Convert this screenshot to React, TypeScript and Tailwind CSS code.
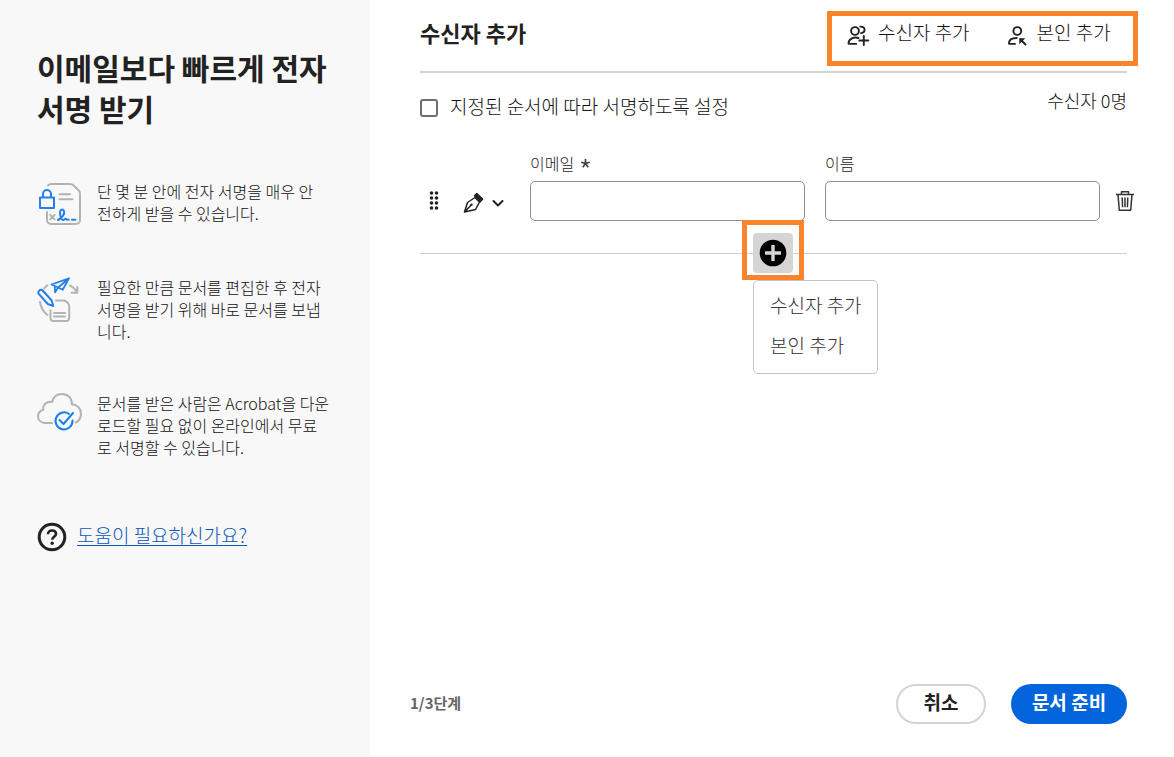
import type { ReactNode } from "react";

const AddPersonIcon = () => (
  <svg width="24" height="24" viewBox="0 0 24 24" fill="none" stroke="#222" strokeWidth="1.9" strokeLinecap="round" aria-hidden="true">
    <circle cx="8" cy="6" r="3.9" />
    <path d="M11.5 13C7 11.6 1.8 13.5 1.5 18.2c0 .5.2.7.7.7h7" />
    <path d="M13.3 1.6c2.6 0 4.3 1.3 4.3 3.3 0 1.9-1.4 2.8-3.6 3.2" />
    <path d="M16.8 11v9M12.3 15.5h9" />
  </svg>
);

const AddSelfIcon = () => (
  <svg width="24" height="24" viewBox="0 0 24 24" fill="none" stroke="#222" strokeWidth="1.9" strokeLinecap="round" aria-hidden="true">
    <circle cx="10.3" cy="6" r="3.9" />
    <path d="M9.7 13c-4.2 0-7.6 1.8-7.8 5.2 0 .5.2.7.7.7H8" />
    <path d="M13.5 14.5l5 5" />
    <path d="M12.3 13.3h6l-6 6z" fill="#222" stroke="none" />
  </svg>
);

const SecureIcon = () => (
  <svg width="46" height="46" viewBox="-1 -2 46 46" fill="none" stroke="#b3b3b3" strokeWidth="2" strokeLinecap="round" strokeLinejoin="round" aria-hidden="true">
    <path d="M10 3.5c1-1.2 2-1.5 3.5-1.5H32c1.4 0 2.4.4 3.3 1.3l5.4 5.2c.9.9 1.3 1.8 1.3 3.2V38a4 4 0 0 1-4 4H13a4 4 0 0 1-4-4v-8" />
    <path d="M21.5 12.3H32M21.5 17.3h13M12.2 33l4.4 4.4M16.6 33l-4.4 4.4" />
    <g stroke="#2680eb">
      <rect x="2" y="15.5" width="14" height="10.5" />
      <path d="M5 15v-3a4 4 0 0 1 8 0v3" />
      <path d="M20 38c4-2 7-6 6-9-1-2.5-4.2-1.5-4 2 .2 4 1.5 7.5 3.5 7 1.5-.5 1.5-2 2.5-1 .8.7 1.5.7 2.7.7M34 37.7h3.5" />
    </g>
  </svg>
);

const PrepareIcon = () => (
  <svg width="46" height="50" viewBox="0 0 46 50" fill="none" stroke="#b3b3b3" strokeWidth="2" strokeLinecap="round" strokeLinejoin="round" aria-hidden="true">
    <path d="M7 12.5c1-1.3 2.1-2.3 3.5-3.2M33 9.3c3 1.5 5.5 4 7.2 7.2M40.3 11v5.7h-5.7M3 26c.8 5.2 3.3 9.7 7.5 13" />
    <path d="M19 24.5h7.5c1.4 0 2 .3 2.9 1.2l1.7 1.7c.8.8 1.1 1.6 1.1 2.8V42a3 3 0 0 1-3 3H16.500a3 3 0 0 1-3-3v-7.5M17 37h11M17 40.5h11" />
    <g stroke="#2680eb">
      <path d="M14.5 8.5L32 2.3l-6.3 11.5-4.5-2.3zM32 2.3L21.2 11.5M17.800 10.3l.2 6 3.2-4.8" strokeWidth="1.8" />
      <path d="M2 14.8c1.3-1.5 2.7-1.3 3.7-.3l9 10L16.2 30l-5.4-2L1.7 17.8c-.6-.9-.5-2 .3-3z" fill="#f8f8f8" />
    </g>
  </svg>
);

const CloudIcon = () => (
  <svg width="46" height="40" viewBox="0 0 46 40" fill="none" stroke="#b3b3b3" strokeWidth="2" strokeLinecap="round" strokeLinejoin="round" aria-hidden="true">
    <path d="M15 31H8c-4 0-7-2.8-7-6.7 0-3.3 2-5.7 5.3-6.6-.8-5 3.7-9 8.7-7.7C16.5 4.8 20.5 2 25 2c6 0 10.2 4.4 9.9 10.2C40.5 12.5 44 16.5 44 21.5c0 4-1.8 7.3-5.3 9" />
    <g stroke="#1480eb">
      <path d="M32 22A8.5 8.5 0 1 0 35.5 28.5" />
      <path d="M22.5 28l4 4 9.5-11" />
    </g>
  </svg>
);

const HelpIcon = () => (
  <svg width="30" height="30" viewBox="0 0 30 30" fill="none" stroke="#222" strokeWidth="3" aria-hidden="true">
    <circle cx="15" cy="15" r="12.8" />
    <path d="M11 12.2c0-2.5 1.8-3.7 4-3.7s4 1.2 4 3.4c0 2.9-3.8 2.9-3.8 5.9" strokeWidth="2.6" />
    <circle cx="15.2" cy="21.3" r="1.7" fill="#222" stroke="none" />
  </svg>
);

const GripIcon = () => (
  <svg width="10" height="20" viewBox="0 0 10 20" fill="#222" aria-hidden="true">
    {[2, 7, 12, 17].map((y) => (
      <g key={y}>
        <circle cx="2.5" cy={y} r="1.8" />
        <circle cx="7.5" cy={y} r="1.8" />
      </g>
    ))}
  </svg>
);

const NibIcon = () => (
  <svg width="22" height="22" viewBox="0 0 22 22" fill="none" stroke="#222" strokeWidth="1.5" strokeLinejoin="round" aria-hidden="true">
    <path d="M1.5 20L4.5 10.500 12 5.500l4.500 4.500-4 7.500zM1.500 20l6.800-7" />
    <circle cx="8.5" cy="12.7" r="1.2" fill="#222" stroke="none" />
    <path d="M11.5 3.8L13.8 1.5l5.8 5.6-2.3 2.6z" fill="#222" />
  </svg>
);

const ChevronIcon = () => (
  <svg width="12" height="8" viewBox="0 0 12 8" fill="none" stroke="#222" strokeWidth="2" strokeLinecap="round" strokeLinejoin="round" aria-hidden="true">
    <path d="M1.5 2L6 6.5 10.5 2" />
  </svg>
);

const TrashIcon = () => (
  <svg width="20" height="22" viewBox="0 0 20 22" fill="none" stroke="#333" strokeWidth="1.5" strokeLinejoin="round" aria-hidden="true">
    <path d="M1 4.5h18M6.5 4V1.7h7V4M3 4.5l1.3 15.7h11.4L17 4.5M7.2 7.5l.4 9.7M10 7.5v9.7M12.8 7.5l-.4 9.7" />
  </svg>
);

const PlusCircleIcon = () => (
  <svg width="28" height="28" viewBox="0 0 28 28" aria-hidden="true">
    <circle cx="14" cy="14" r="13.3" fill="#000" />
    <path d="M14 6v16M6 14h16" stroke="#d5d5d5" strokeWidth="3.4" />
  </svg>
);

const Feature = ({ icon, children }: { icon: ReactNode; children: ReactNode }) => (
  <li className="flex items-start gap-[14px]">
    <span className="shrink-0">{icon}</span>
    <p className="text-[16px] leading-[22px] whitespace-nowrap">{children}</p>
  </li>
);

const Sidebar = () => (
  <aside className="w-[370px] shrink-0 bg-[#f8f8f8] pt-[47px] pr-10 pl-[37px]">
    <h1 className="text-[30px] leading-[41px] font-bold">
      이메일보다 빠르게 전자
      <br />
      서명 받기
    </h1>
    <ul className="mt-[51px] flex flex-col gap-[50px] font-light text-[#111]">
      <Feature icon={<SecureIcon />}>
        단 몇 분 안에 전자 서명을 매우 안
        <br />
        전하게 받을 수 있습니다.
      </Feature>
      <Feature icon={<PrepareIcon />}>
        필요한 만큼 문서를 편집한 후 전자
        <br />
        서명을 받기 위해 바로 문서를 보냅
        <br />
        니다.
      </Feature>
      <Feature icon={<CloudIcon />}>
        문서를 받은 사람은 Acrobat을 다운
        <br />
        로드할 필요 없이 온라인에서 무료
        <br />
        로 서명할 수 있습니다.
      </Feature>
    </ul>
    <div className="mt-[63px] flex items-center gap-[10px]">
      <HelpIcon />
      <a href="#help" className="pb-1 text-[19px] leading-7 font-light text-[#0d55b8] underline underline-offset-2">
        도움이 필요하신가요?
      </a>
    </div>
  </aside>
);

const AddMenu = () => (
  <div className="absolute top-[-6px] left-[322px]">
    <div className="w-fit border-[5px] border-[#fa842b] px-[6px] pt-2 pb-[2px]">
      <button type="button" aria-label="추가" className="flex size-10 items-center justify-center rounded bg-[#d5d5d5]">
        <PlusCircleIcon />
      </button>
    </div>
    <div className="ml-[11px] flex w-[125px] flex-col rounded-[5px] border border-[#c4c4c4] bg-white px-4 pt-1 pb-2 text-[19px] font-light whitespace-nowrap text-[#333]">
      <button type="button" className="h-10 text-left">수신자 추가</button>
      <button type="button" className="h-10 text-left">본인 추가</button>
    </div>
  </div>
);

const RecipientRow = () => (
  <div className="flex items-end">
    <div className="flex h-10 w-[110px] shrink-0 items-center pl-[9px]">
      <GripIcon />
      <button type="button" aria-label="역할" className="ml-6 flex items-center gap-[7px] pt-1">
        <NibIcon />
        <ChevronIcon />
      </button>
    </div>
    <div className="flex flex-1 gap-5">
      <div className="flex-1">
        <label htmlFor="email" className="flex h-9 items-center gap-[6px] text-[16px] font-light text-[#222]">
          이메일
          <svg width="11" height="11" viewBox="0 0 11 11" stroke="#444" strokeWidth="1.7" aria-hidden="true">
            <path d="M5.5 5.5V1M5.5 5.5L1.2 4.2M5.5 5.5l4.3-1.3M5.5 5.5L2.8 9.3M5.5 5.5l2.7 3.8" />
          </svg>
        </label>
        <input id="email" type="email" className="block h-10 w-full rounded-[5px] border border-[#909090] px-3" />
      </div>
      <div className="flex-1">
        <label htmlFor="name" className="flex h-9 items-center text-[16px] font-light text-[#222]">
          이름
        </label>
        <input id="name" type="text" className="block h-10 w-full rounded-[5px] border border-[#909090] px-3" />
      </div>
    </div>
    <button type="button" aria-label="삭제" className="flex h-10 w-[38px] items-center justify-end pr-[3px]">
      <TrashIcon />
    </button>
  </div>
);

const App = () => (
  <div className="flex min-h-screen bg-white font-['Noto_Sans_CJK_KR',sans-serif] text-[#222]">
    <Sidebar />
    <main className="flex flex-1 flex-col pt-[11px] pr-9 pb-[33px] pl-10">
      <section className="pl-[10px]">
        <header className="flex items-start justify-between">
          <h2 className="text-[22px] leading-[42px] font-bold">수신자 추가</h2>
          <div className="flex h-[55px] w-[311px] items-start gap-[37px] border-[5px] border-[#fa842b] pt-[2px] pl-[15px] text-[19px] leading-7 font-light text-[#111]">
            <button type="button" className="flex items-end gap-[7px]">
              <AddPersonIcon />
              <span className="pb-[3px]">수신자 추가</span>
            </button>
            <button type="button" className="flex items-end gap-[6px]">
              <AddSelfIcon />
              <span className="pb-[3px]">본인 추가</span>
            </button>
          </div>
        </header>
        <hr className="mt-[5px] mr-[11px] border-t-2 border-[#d4d4d4]" />
        <div className="mt-3 mr-[11px] flex items-start justify-between font-light text-[#111]">
          <div className="flex h-[46px] items-center gap-3">
            <input id="ordered" type="checkbox" className="size-[18px] appearance-none rounded-[3px] border-2 border-[#6e6e6e] checked:bg-[#6e6e6e]" />
            <label htmlFor="ordered" className="pb-1 text-[19px]">지정된 순서에 따라 서명하도록 설정</label>
          </div>
          <p className="text-[18px] leading-[30px]">수신자 0명</p>
        </div>
        <div className="mt-[14px]">
          <RecipientRow />
        </div>
        <div className="relative mt-[5px] pt-[27px]">
          <hr className="mr-[11px] border-[#cfcfcf]" />
          <AddMenu />
        </div>
      </section>
      <footer className="mt-auto mr-[11px] flex items-center justify-between">
        <p className="pb-[2px] text-[15px] font-bold text-[#666]">1/3단계</p>
        <div className="flex gap-[25px] text-[19px] font-bold">
          <button type="button" className="h-10 w-[90px] rounded-full border-2 border-[#d4d4d4] pb-1">취소</button>
          <button type="button" className="h-10 w-[116px] rounded-full bg-[#0265dc] pb-1 text-white">문서 준비</button>
        </div>
      </footer>
    </main>
  </div>
);

export default App;
